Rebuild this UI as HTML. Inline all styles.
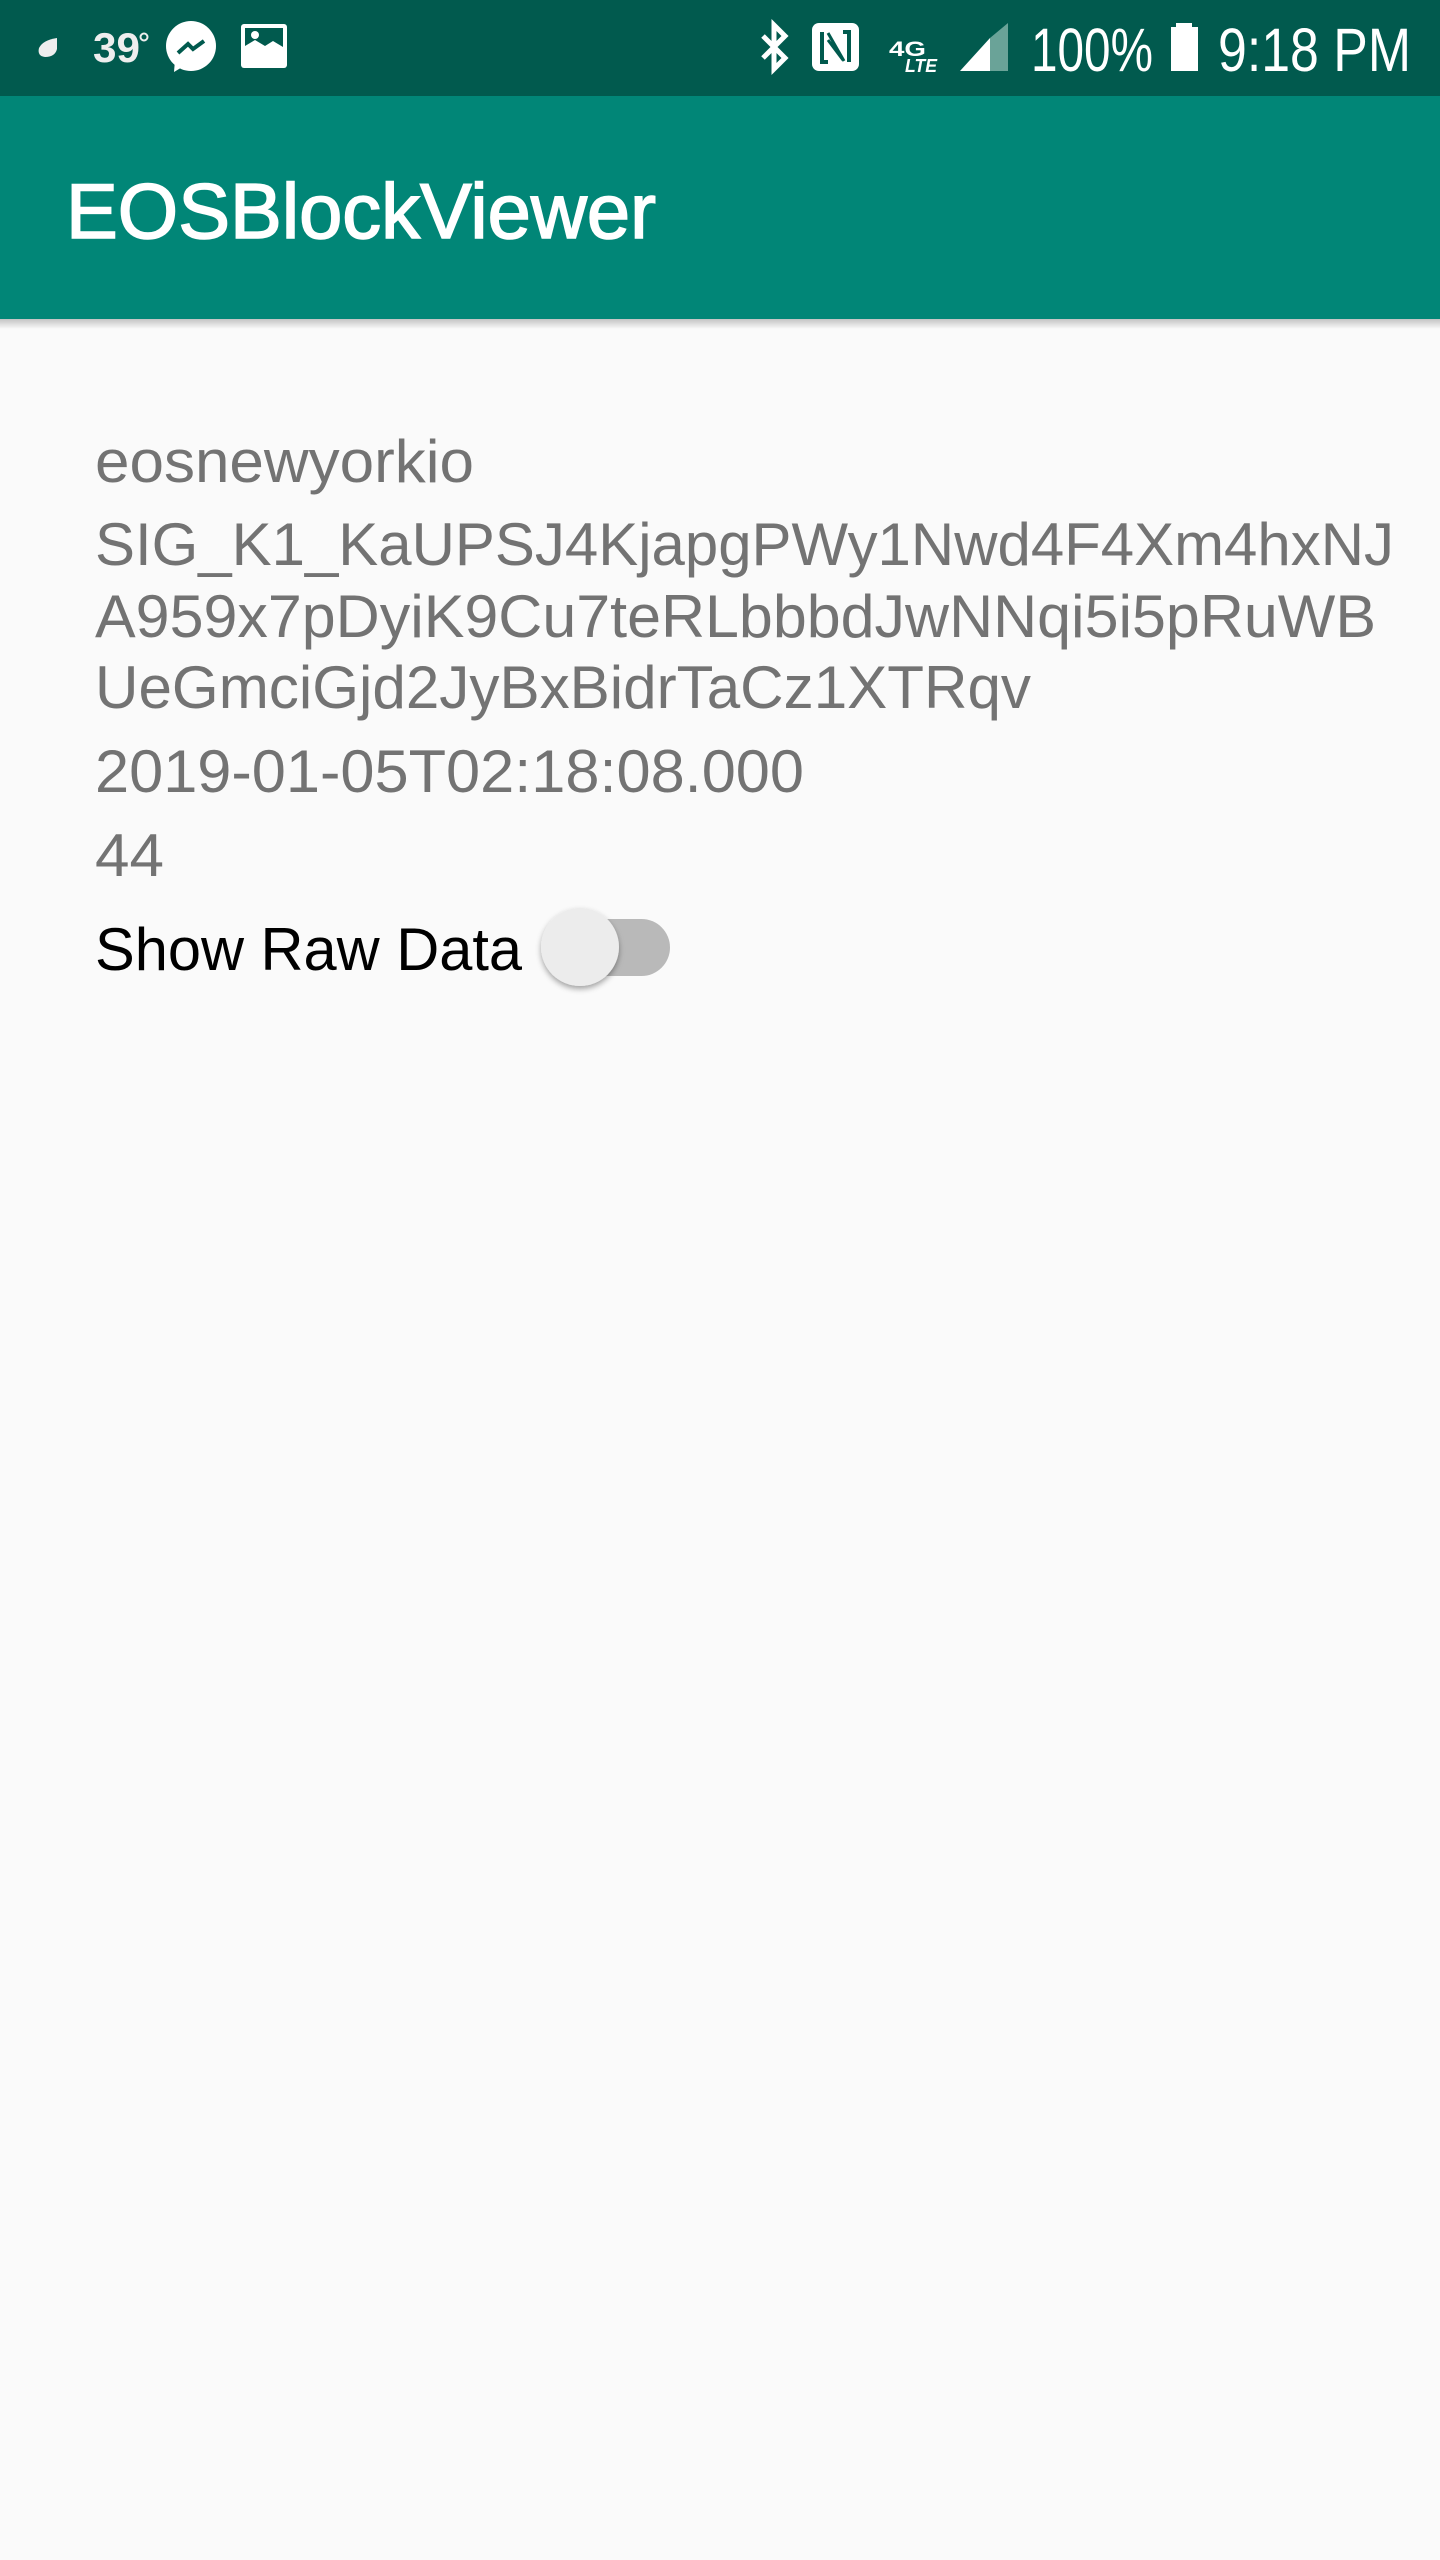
<!DOCTYPE html>
<html><head><meta charset="utf-8"><style>
html,body{margin:0;padding:0;background:#fafafa;width:1440px;height:2560px;overflow:hidden}
svg{display:block}
</style></head><body>
<svg width="1440" height="2560" viewBox="0 0 1440 2560" xmlns="http://www.w3.org/2000/svg" font-family="Liberation Sans, sans-serif">
<defs>
<linearGradient id="sh" x1="0" y1="0" x2="0" y2="1"><stop offset="0" stop-color="#000" stop-opacity="0.22"/><stop offset="1" stop-color="#000" stop-opacity="0"/></linearGradient>
<filter id="ts" x="-50%" y="-50%" width="200%" height="200%"><feDropShadow dx="0" dy="3" stdDeviation="3" flood-color="#000" flood-opacity="0.35"/></filter>
</defs>
<rect width="1440" height="2560" fill="#fafafa"/>
<rect width="1440" height="96" fill="#015a4e"/>
<rect y="96" width="1440" height="223" fill="#018677"/>
<rect y="319" width="1440" height="10" fill="url(#sh)"/>
<!-- status left -->
<path d="M57 38 q-14 2 -18 10 q-2 8 6 9 q10 0 12 -8z" fill="#eee"/>
<text x="93" y="62" font-size="42" font-weight="bold" fill="#eee" textLength="47" lengthAdjust="spacingAndGlyphs">39</text>
<circle cx="144" cy="37" r="3.5" fill="none" stroke="#eee" stroke-width="2"/>
<circle cx="191" cy="46" r="25" fill="#fff"/>
<path d="M175 60 l-1 12 l10 -6z" fill="#fff"/>
<path d="M178 53 l10 -9 l5 5 l11 -8" fill="none" stroke="#015a4e" stroke-width="4" stroke-linejoin="miter"/>
<rect x="241" y="24" width="46" height="44" rx="3" fill="#fff"/>
<rect x="245" y="28" width="38" height="22" fill="#015a4e"/>
<path d="M245 50 l0 -4 l10 -6 l10 6 l8 -5 l10 6 v3z" fill="#fff"/>
<circle cx="255" cy="35" r="4" fill="#fff"/>
<!-- status right -->
<path d="M763 36 l22 22 l-11 11 v-44 l11 11 l-22 22" fill="none" stroke="#fff" stroke-width="5"/>
<rect x="812" y="23" width="47" height="48" rx="7" fill="#fff"/>
<path d="M822 32 v30 h6 M849 62 v-30 h-6" fill="none" stroke="#015a4e" stroke-width="4"/>
<path d="M828 33 l16 28 M828 40 l15 20" stroke="#015a4e" stroke-width="3"/>
<text x="889" y="56" font-size="21" font-weight="bold" fill="#fff" textLength="37" lengthAdjust="spacingAndGlyphs">4G</text>
<text x="905" y="72" font-size="18" font-weight="bold" font-style="italic" fill="#fff" textLength="32" lengthAdjust="spacingAndGlyphs">LTE</text>
<path d="M960 71 l30 -33 v33z" fill="#fff"/>
<path d="M990 38 l18 -15 v48 h-18z" fill="#6aa398"/>
<text x="1031" y="71" font-size="61" fill="#fff" textLength="122" lengthAdjust="spacingAndGlyphs">100%</text>
<rect x="1176" y="23" width="16" height="6" fill="#fff"/>
<rect x="1171" y="27" width="27" height="44" fill="#fff"/>
<text x="1218" y="71" font-size="61" fill="#fff" textLength="193" lengthAdjust="spacingAndGlyphs">9:18 PM</text>
<!-- title -->
<text x="66" y="238" font-size="78" fill="#fff" stroke="#fff" stroke-width="1.6" textLength="590" lengthAdjust="spacingAndGlyphs">EOSBlockViewer</text>
<!-- content -->
<g font-size="60" fill="#737373">
<text x="95" y="482" textLength="379" lengthAdjust="spacingAndGlyphs">eosnewyorkio</text>
<text x="95" y="565" textLength="1299" lengthAdjust="spacingAndGlyphs">SIG_K1_KaUPSJ4KjapgPWy1Nwd4F4Xm4hxNJ</text>
<text x="95" y="637" textLength="1281" lengthAdjust="spacingAndGlyphs">A959x7pDyiK9Cu7teRLbbbdJwNNqi5i5pRuWB</text>
<text x="95" y="708" textLength="936" lengthAdjust="spacingAndGlyphs">UeGmciGjd2JyBxBidrTaCz1XTRqv</text>
<text x="95" y="792" textLength="709" lengthAdjust="spacingAndGlyphs">2019-01-05T02:18:08.000</text>
<text x="95" y="876" textLength="69" lengthAdjust="spacingAndGlyphs">44</text>
</g>
<text x="95" y="970" font-size="60" fill="#000" textLength="427" lengthAdjust="spacingAndGlyphs">Show Raw Data</text>
<rect x="560" y="919" width="110" height="57" rx="28.5" fill="#b9b9b9"/>
<circle cx="580" cy="947" r="39" fill="#ececec" filter="url(#ts)"/>
</svg>
</body></html>
